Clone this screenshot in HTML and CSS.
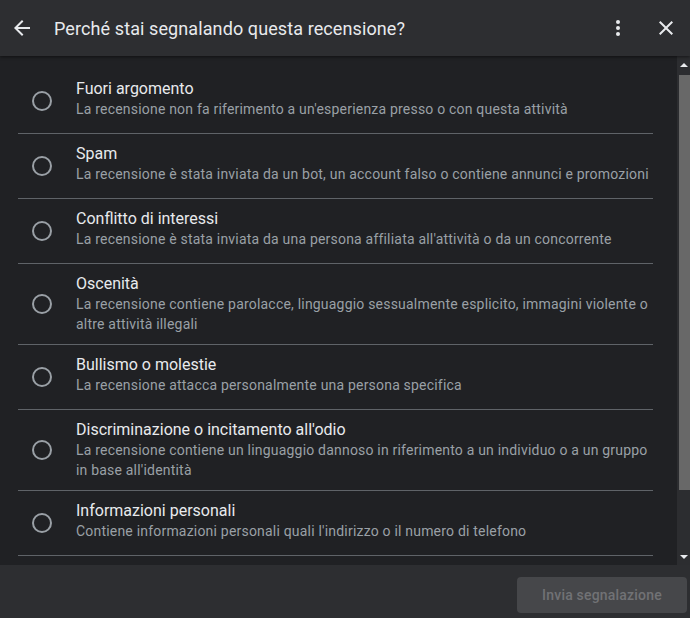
FILE: index.html
```html
<!DOCTYPE html>
<html lang="it">
<head>
<meta charset="utf-8">
<title>Segnala recensione</title>
<link rel="stylesheet" href="styles.css">
</head>
<body>
<div class="dialog">
  <header class="header">
    <span class="icon-btn">
      <svg viewBox="0 0 24 24" width="24" height="24"><path d="M20 11H7.83l5.59-5.59L12 4l-8 8 8 8 1.41-1.41L7.83 13H20v-2z"/></svg>
    </span>
    <h1 class="title">Perché stai segnalando questa recensione?</h1>
    <span class="icon-btn more">
      <svg viewBox="0 0 24 24" width="24" height="24"><circle cx="12" cy="6" r="2"/><circle cx="12" cy="12" r="2"/><circle cx="12" cy="18" r="2"/></svg>
    </span>
    <span class="icon-btn close">
      <svg viewBox="0 0 24 24" width="24" height="24"><path d="M19 6.41L17.59 5 12 10.59 6.41 5 5 6.41 10.59 12 5 17.59 6.41 19 12 13.41 17.59 19 19 17.59 13.41 12z"/></svg>
    </span>
  </header>
  <div class="body">
    <div class="list">
      <div class="row">
        <div class="radio"><span class="circle"></span></div>
        <div class="text">
          <div class="row-title">Fuori argomento</div>
          <div class="row-desc">La recensione non fa riferimento a un'esperienza presso o con questa attività</div>
        </div>
      </div>
      <div class="row">
        <div class="radio"><span class="circle"></span></div>
        <div class="text">
          <div class="row-title">Spam</div>
          <div class="row-desc">La recensione è stata inviata da un bot, un account falso o contiene annunci e promozioni</div>
        </div>
      </div>
      <div class="row">
        <div class="radio"><span class="circle"></span></div>
        <div class="text">
          <div class="row-title">Conflitto di interessi</div>
          <div class="row-desc">La recensione è stata inviata da una persona affiliata all'attività o da un concorrente</div>
        </div>
      </div>
      <div class="row">
        <div class="radio"><span class="circle"></span></div>
        <div class="text">
          <div class="row-title">Oscenità</div>
          <div class="row-desc">La recensione contiene parolacce, linguaggio sessualmente esplicito, immagini violente o altre attività illegali</div>
        </div>
      </div>
      <div class="row">
        <div class="radio"><span class="circle"></span></div>
        <div class="text">
          <div class="row-title">Bullismo o molestie</div>
          <div class="row-desc">La recensione attacca personalmente una persona specifica</div>
        </div>
      </div>
      <div class="row">
        <div class="radio"><span class="circle"></span></div>
        <div class="text">
          <div class="row-title">Discriminazione o incitamento all'odio</div>
          <div class="row-desc">La recensione contiene un linguaggio dannoso in riferimento a un individuo o a un gruppo in base all'identità</div>
        </div>
      </div>
      <div class="row">
        <div class="radio"><span class="circle"></span></div>
        <div class="text">
          <div class="row-title">Informazioni personali</div>
          <div class="row-desc">Contiene informazioni personali quali l'indirizzo o il numero di telefono</div>
        </div>
      </div>
    </div>
    <div class="scrollbar">
      <div class="sb-btn"><span class="tri-up"></span></div>
      <div class="sb-track"><div class="sb-thumb"></div></div>
      <div class="sb-btn"><span class="tri-down"></span></div>
    </div>
  </div>
  <footer class="footer">
    <button class="submit" disabled>Invia segnalazione</button>
  </footer>
</div>
</body>
</html>
```
FILE: styles.css
```css
* { box-sizing: border-box; }
html, body { margin: 0; padding: 0; }
body {
  background: #202124;
  font-family: Roboto, "Noto Sans", Arial, sans-serif;
  color: #e8eaed;
}
.dialog {
  height: 618px;
  display: flex;
  flex-direction: column;
  overflow: hidden;
}
.header {
  height: 56px;
  flex: none;
  display: flex;
  align-items: center;
  padding: 0 12px 0 10px;
  background: #2d2e31;
  box-shadow: 0 1px 3px rgba(0,0,0,0.5);
  position: relative;
  z-index: 1;
}
.icon-btn {
  width: 24px;
  height: 24px;
  display: flex;
  fill: #e8eaed;
  flex: none;
}
.title {
  margin: 0 0 0 20px;
  font-size: 18px;
  font-weight: 400;
  letter-spacing: 0.1px;
  color: #e8eaed;
  flex: 1;
  white-space: nowrap;
}
.more { margin-right: 24px; }
.body {
  flex: 1;
  min-height: 0;
  display: flex;
}
.list {
  flex: 1;
  overflow: hidden;
  padding: 13px 24px 0 18px;
}
.row {
  display: flex;
  align-items: center;
  min-height: 64px;
  border-bottom: 1px solid #5f6368;
  box-sizing: content-box;
}
.radio {
  width: 48px;
  flex: none;
  display: flex;
  justify-content: center;
}
.circle {
  width: 20px;
  height: 20px;
  border: 2px solid #9aa0a6;
  border-radius: 50%;
}
.text {
  align-self: flex-start;
  margin-left: 10px;
  padding: 10px 0;
  flex: 1;
}
.row-title {
  font-size: 16px;
  line-height: 20px;
  color: #e8eaed;
}
.row-desc {
  font-size: 14px;
  line-height: 20px;
  letter-spacing: 0.2px;
  color: #9aa0a6;
}
.scrollbar {
  width: 13px;
  flex: none;
  display: flex;
  flex-direction: column;
  background: #2c2d30;
}
.sb-btn {
  height: 17px;
  flex: none;
  display: flex;
  align-items: center;
  justify-content: center;
}
.tri-up {
  border-left: 4px solid transparent;
  border-right: 4px solid transparent;
  border-bottom: 4px solid #e8eaed;
}
.tri-down {
  border-left: 4px solid transparent;
  border-right: 4px solid transparent;
  border-top: 4px solid #e8eaed;
}
.sb-track {
  flex: 1;
  padding: 2px 0 0 2px;
}
.sb-thumb {
  height: 415px;
  background: #686868;
}
.footer {
  height: 53px;
  flex: none;
  display: flex;
  justify-content: flex-end;
  align-items: flex-start;
  padding: 12px 3px 0 0;
  background: #2d2e31;
}
.submit {
  width: 170px;
  height: 36px;
  border: none;
  border-radius: 4px;
  background: #46474a;
  color: #717275;
  font-family: Roboto, "Noto Sans", Arial, sans-serif;
  font-size: 14px;
  font-weight: 500;
  letter-spacing: 0.2px;
}
```
